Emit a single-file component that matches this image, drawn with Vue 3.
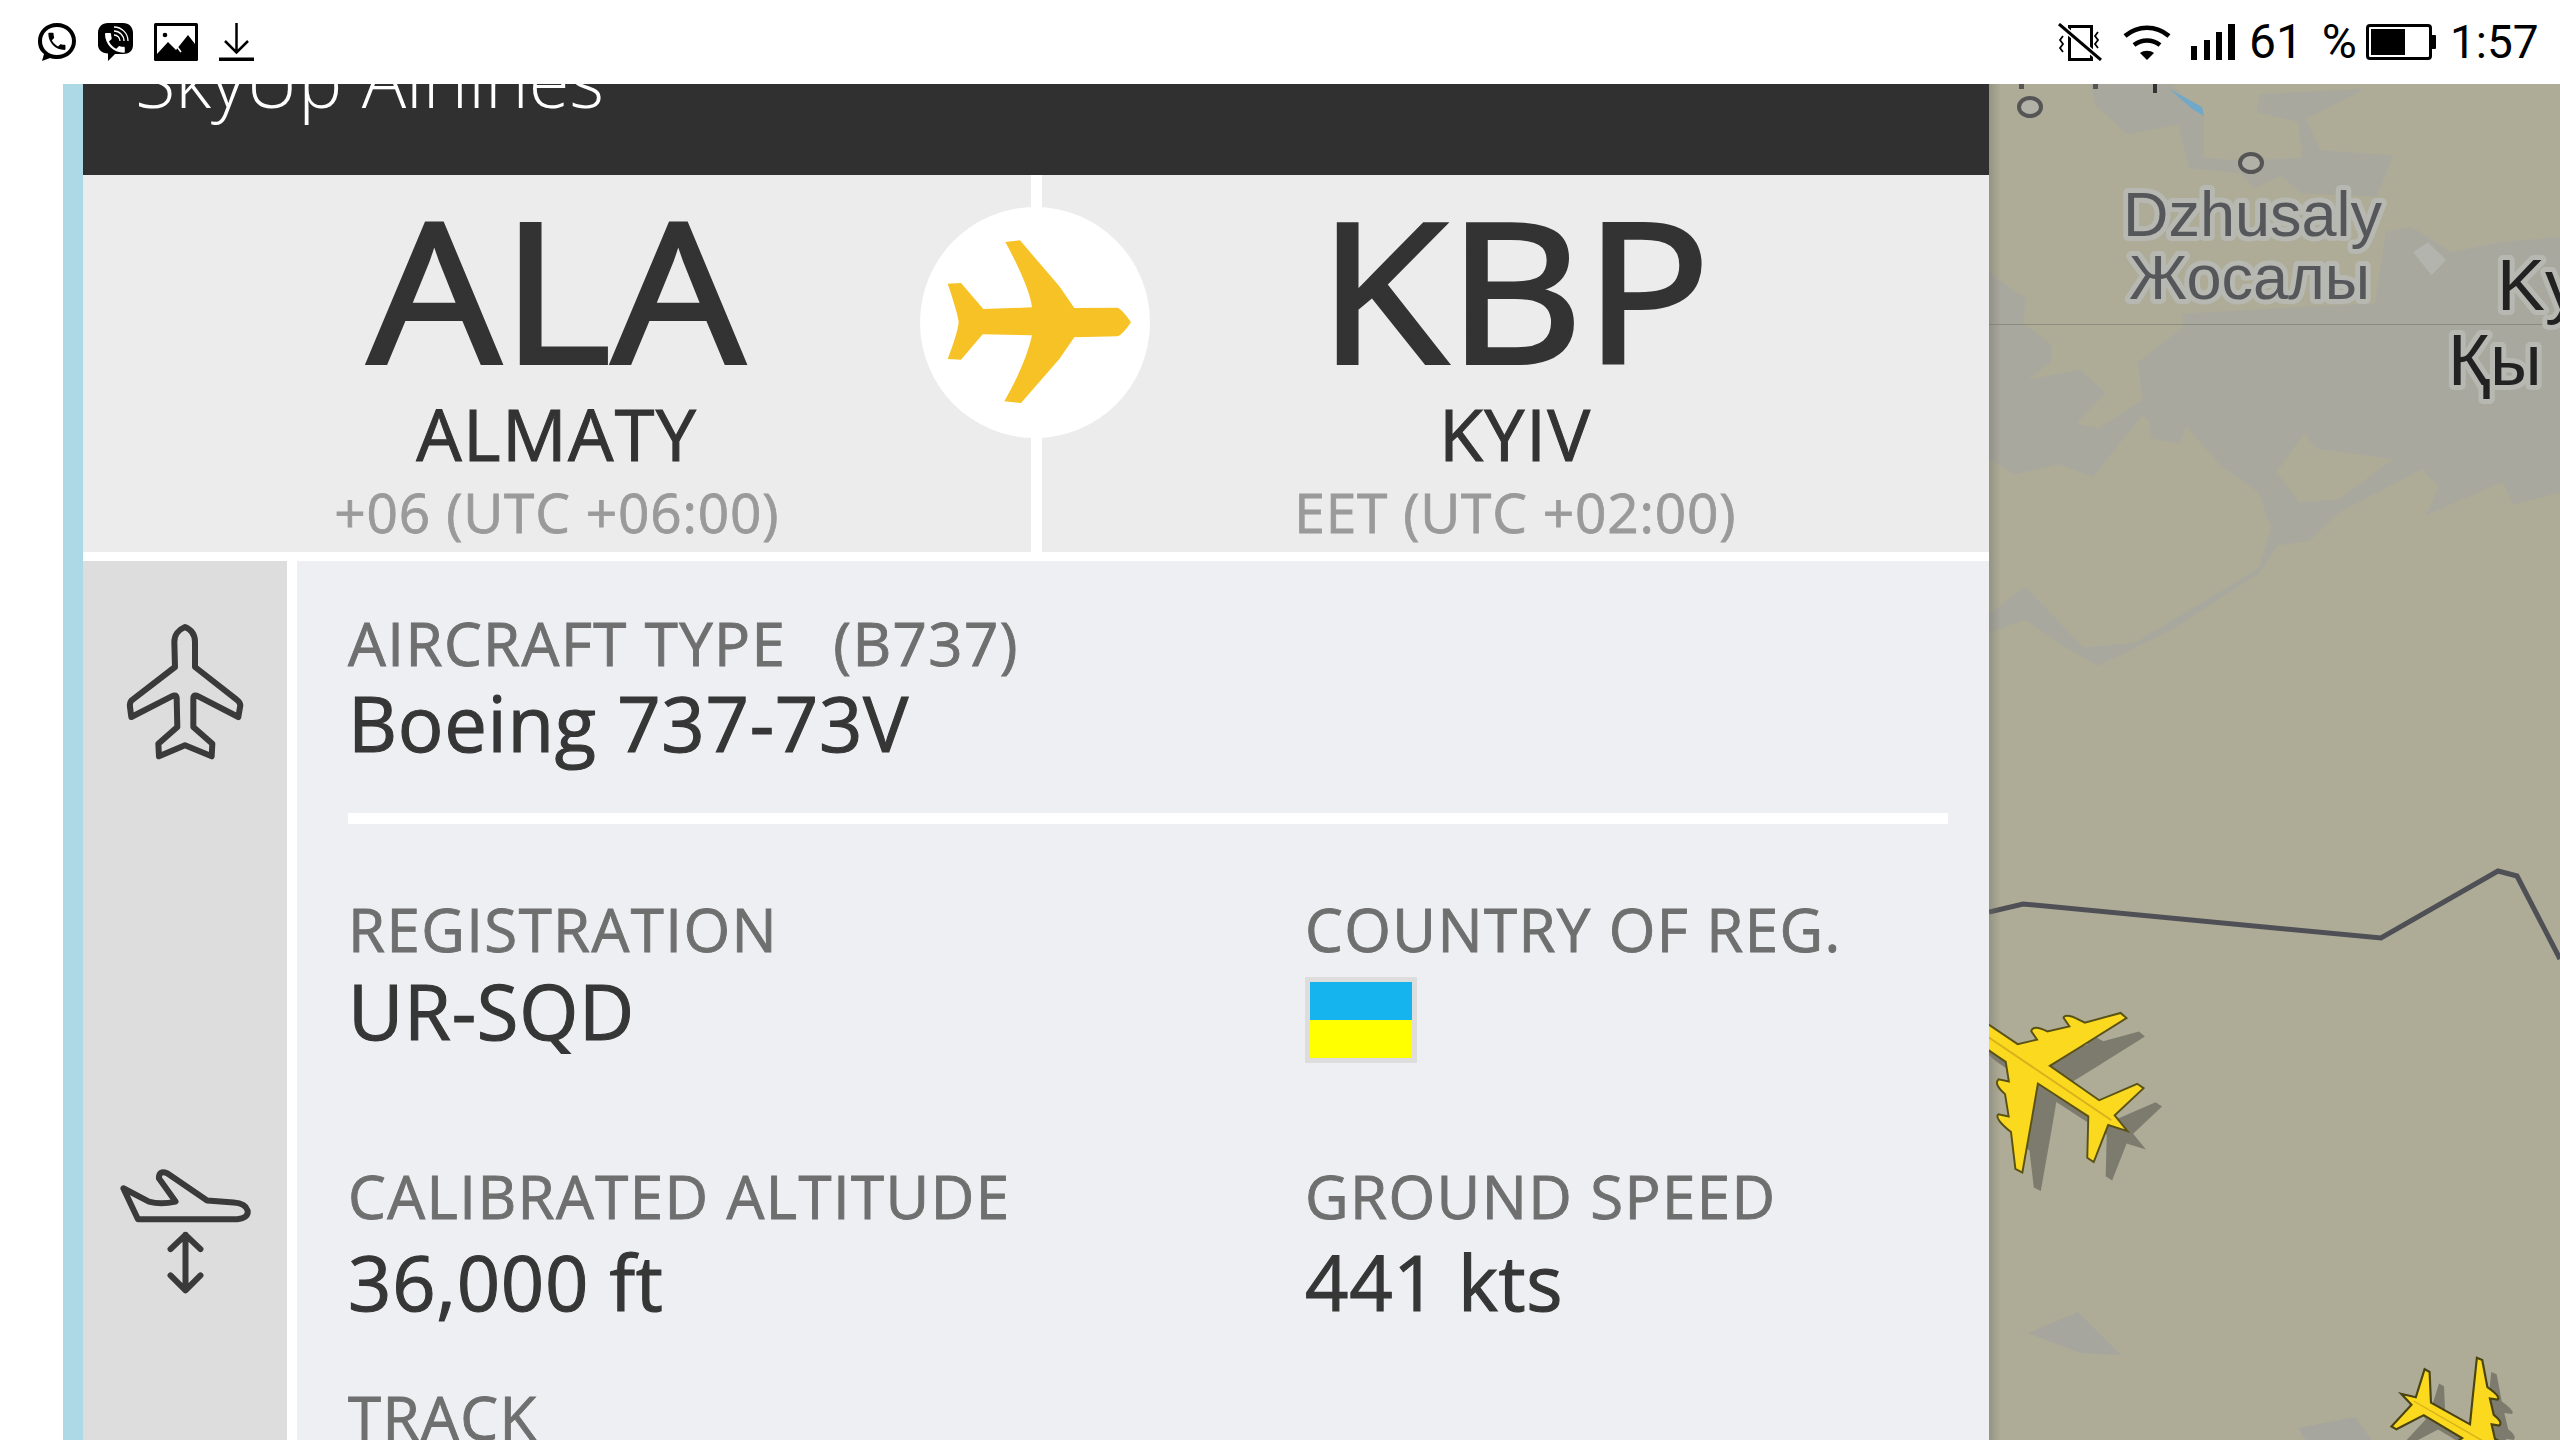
<script setup>
const planePath = 'M0 -85 Q9 -80 11 -60 L11 -24 L26 -10 L30 -20 Q37 -22 39 -6 L56 10 L60 0 Q66 -2 68 21 L97 46 L96 54 L42 30 L11 16 L10 78 L46 101 L46 109 L6 100 L0 120 L-6 100 L-46 109 L-46 101 L-10 78 L-11 16 L-42 30 L-96 54 L-97 46 L-68 21 Q-66 -2 -60 0 L-56 10 L-39 -6 Q-37 -22 -30 -20 L-26 -10 L-11 -24 L-11 -60 Q-9 -80 0 -85Z'
</script>

<template>
  <div class="screen">
    <header class="status">
      <div class="status-left">
        <svg class="i-wa" viewBox="0 0 40 38" preserveAspectRatio="none">
          <path fill-rule="evenodd" d="M20 0C9 0 1 8 1 18c0 6 2 10 6 13l-2 7 8-3c2 .6 4 1 7 1 11 0 19-8 19-18S31 0 20 0zm0 4c8.500 0 15 6 15 14s-6.500 14-15 14S5 26 5 18 11.500 4 20 4z" />
          <g transform="translate(8.500 7) scale(.95)"><path d="M6.620 10.790c1.440 2.830 3.760 5.140 6.590 6.590l2.200-2.200c.27-.27.67-.36 1.020-.24 1.120.37 2.330.57 3.570.57.55 0 1 .45 1 1V20c0 .55-.45 1-1 1-9.390 0-17-7.610-17-17 0-.55.45-1 1-1h3.500c.55 0 1 .45 1 1 0 1.250.2 2.450.57 3.570.11.350.03.740-.25 1.020l-2.200 2.200z" /></g>
        </svg>
        <svg class="i-vb" viewBox="0 0 35 38" preserveAspectRatio="none">
          <path d="M10 0h15c6 0 10 4 10 10v12c0 6-4 9-10 9h-8l-7 7v-7.500C4 30 0 27 0 22V10C0 4 4 0 10 0z" />
          <g transform="translate(3.700 6.700) scale(1.100)"><path fill="#fff" d="M6.620 10.790c1.440 2.830 3.760 5.140 6.590 6.590l2.200-2.200c.27-.27.67-.36 1.020-.24 1.120.37 2.330.57 3.570.57.55 0 1 .45 1 1V20c0 .55-.45 1-1 1-9.390 0-17-7.610-17-17 0-.55.45-1 1-1h3.500c.55 0 1 .45 1 1 0 1.250.2 2.450.57 3.570.11.350.03.740-.25 1.020l-2.200 2.200z" /></g>
          <path d="M16 4a14 14 0 0 1 14 14M16 8a10 10 0 0 1 10 10M16 12a6 6 0 0 1 6 6" fill="none" stroke="#fff" stroke-width="1.300" />
        </svg>
        <svg class="i-im" viewBox="0 0 44 38" preserveAspectRatio="none">
          <rect width="44" height="38" rx="1.500" />
          <rect x="3" y="3" width="38" height="32" fill="#fff" />
          <circle cx="11" cy="12" r="2.300" />
          <path d="M3 35V31L14 19 22 27 34 12 41 21V35z" />
          <path d="M15 13L27 29" stroke="#fff" stroke-width="1.600" />
        </svg>
        <svg class="i-dl" viewBox="0 0 35 38" preserveAspectRatio="none">
          <path d="M17.500 0v29M6 18l11.500 11.500L29 18" fill="none" stroke="#000" stroke-width="2.500" />
          <rect y="34.500" width="35" height="3.500" />
        </svg>
      </div>
      <div class="status-right">
        <svg class="i-vib" viewBox="0 0 44 38" preserveAspectRatio="none">
          <path d="M11.500 3.500h22v33h-22z" fill="none" stroke="#000" stroke-width="3" />
          <path d="M1 1l42 36" stroke="#fff" stroke-width="6" />
          <path d="M1 1l42 36" stroke="#000" stroke-width="3" />
          <path d="M5 13l-3 4 3 4-3 4 3 4M40 9l-3 4 3 4-3 4 3 4" fill="none" stroke="#000" stroke-width="1.800" />
        </svg>
        <svg class="i-wifi" viewBox="0 0 50 36" preserveAspectRatio="none">
          <path d="M3 12C16 1 34 1 47 12M12 21c8-6 18-6 26 0" fill="none" stroke="#000" stroke-width="4.600" />
          <path d="M18 29c4-3 10-3 14 0l-7 7z" />
        </svg>
        <svg class="i-sig" viewBox="0 0 44 36" preserveAspectRatio="none">
          <rect x="0" y="22" width="6" height="14" /><rect x="13" y="16" width="6" height="20" /><rect x="25" y="8" width="6" height="28" /><rect x="37" y="0" width="7" height="36" />
        </svg>
        <span class="st-txt pct">61 %</span>
        <svg class="i-bat" viewBox="0 0 70 36" preserveAspectRatio="none">
          <rect x="1.500" y="1.500" width="63" height="33" rx="2.500" fill="none" stroke="#000" stroke-width="3" />
          <rect x="5" y="5" width="34" height="26" />
          <rect x="65" y="11" width="5" height="14" rx="1" />
        </svg>
        <span class="st-txt time">1:57</span>
      </div>
    </header>

    <main class="main">
      <section class="card">
        <div class="airline"><span class="airline-name">SkyUp Airlines</span></div>

        <div class="route">
          <div class="port">
            <div class="code">ALA</div>
            <div class="city">ALMATY</div>
            <div class="tz">+06 (UTC +06:00)</div>
          </div>
          <div class="route-rule"></div>
          <div class="port">
            <div class="code">KBP</div>
            <div class="city">KYIV</div>
            <div class="tz">EET (UTC +02:00)</div>
          </div>
          <div class="route-badge">
            <svg viewBox="122 112 690 693" width="230" height="231">
              <path fill="#f7c226" d="M205 342L245 340 312 418 458 413Q450 350 378 217L422 212 540 350 585 415 715 414Q730 420 755 458 730 495 715 500L585 503 540 568 425 700 375 695Q440 580 458 497L310 494 245 570 205 568Q235 490 238 458 235 430 205 342Z" />
            </svg>
          </div>
        </div>

        <div class="body">
          <aside class="rail">
            <svg class="rail-plane" viewBox="195 245 360 420">
              <path fill="none" stroke="#3a3a3a" stroke-width="18" stroke-linejoin="round" d="M375 260C355 268 343 285 343 305L345 380 215 480Q208 488 210 500L214 530 335 468Q350 460 350 475L352 560 295 610 297 648 375 615 455 648 457 610 400 560 400 475Q400 460 415 468L535 530 541 495Q540 485 530 478L405 380 405 305C405 285 395 268 375 260Z" />
            </svg>
            <svg class="rail-alt" viewBox="175 145 400 380">
              <path fill="none" stroke="#3a3a3a" stroke-width="18" stroke-linejoin="round" stroke-linecap="round" d="M188 205L232 298 530 298Q565 295 562 272 555 250 520 248L440 242 320 160Q295 150 295 175L345 245Q300 255 265 245Z" />
              <path fill="none" stroke="#3a3a3a" stroke-width="18" stroke-linejoin="round" stroke-linecap="round" d="M375 345V510M330 388L375 345 420 388M330 467L375 512 420 467" />
            </svg>
          </aside>
          <div class="details">
            <div class="block type-block">
              <div class="label">AIRCRAFT TYPE <span class="icao">(B737)</span></div>
              <div class="value">Boeing 737-73V</div>
            </div>
            <div class="rule"></div>
            <div class="grid">
              <div class="cell reg">
                <div class="label">REGISTRATION</div>
                <div class="value">UR-SQD</div>
              </div>
              <div class="cell reg">
                <div class="label">COUNTRY OF REG.</div>
                <div class="flag"><i class="blue"></i><i class="yellow"></i></div>
              </div>
              <div class="cell alt">
                <div class="label">CALIBRATED ALTITUDE</div>
                <div class="value tall">36,000 ft</div>
              </div>
              <div class="cell alt">
                <div class="label">GROUND SPEED</div>
                <div class="value tall">441 kts</div>
              </div>
              <div class="cell track">
                <div class="label">TRACK</div>
              </div>
            </div>
          </div>
        </div>
      </section>

      <div class="map">
        <svg class="map-svg" viewBox="0 0 571 1356" width="571" height="1356">
          <defs>
            <path id="plane" :d="planePath" />
            <linearGradient id="edge" x1="0" x2="1" y1="0" y2="0">
              <stop offset="0" stop-color="#6f6f66" stop-opacity=".4" /><stop offset="1" stop-color="#6f6f66" stop-opacity="0" />
            </linearGradient>
          </defs>
          <rect width="571" height="1356" fill="#aeac97" />
          <g transform="scale(.3642 .5102)" fill="#a8a89f">
            <path d="M280 0L500 0 590 60 520 80 380 98 290 40Z" />
            <path d="M520 80L590 60 590 145 690 150 860 145 850 75 735 55 745 20 1030 10 870 68 910 130 1110 140 1065 220 860 215 800 180 730 205 690 175 550 165Z" />
            <path fill-rule="evenodd" d="M0 370L100 420 95 470 170 510 170 545 105 580 250 560 320 605 240 665 300 675 420 620 410 545 535 475 530 450 1060 430 1090 290 1160 280 1270 330 1400 310 1568 300 1568 800 1440 825 1410 780 1200 845 1235 790 1190 755 960 840 880 895 790 905 770 930 740 960 500 1070 300 1140 200 1100 100 1050 0 1075 0 1040 100 985 260 1105 400 1095 530 1040 740 950 775 870 740 800 640 750 540 670 525 705 445 695 440 660 420 650 285 770 190 745 70 765 0 735ZM790 760L865 685 900 715 1110 735 960 815 850 820Z" />
            <path fill="#b3b4ad" d="M1165 330L1205 310 1255 345 1215 375Z" />
            <path fill="#6fa8c8" d="M495 10L585 45 590 62 560 50Z" />
          </g>
          <rect x="0" y="240" width="571" height="1" fill="#8b8b80" />
          <path fill="#a6a69f" d="M89 1228L132 1271 91 1269 39 1249ZM309 1344L366 1333 383 1356 317 1356Z" />
          <path fill="none" stroke="#4f5055" stroke-width="5" d="M0 828L34 820 392 854 509 787 528 792 571 875" />
          <rect x="0" y="0" width="12" height="1356" fill="url(#edge)" />

          <rect x="30" y="0" width="5" height="5" fill="#565656" /><rect x="104" y="0" width="5" height="5" fill="#565656" /><rect x="164" y="0" width="4" height="9" fill="#333" />
          <ellipse cx="41" cy="23" rx="11" ry="9" fill="#b1b1a8" stroke="#555" stroke-width="4" />
          <ellipse cx="262" cy="79" rx="11" ry="9" fill="#b1b1a8" stroke="#555" stroke-width="4" />

          <text class="t-city" x="134" y="152">Dzhusaly</text>
          <text class="t-city" x="140" y="215">Жосалы</text>
          <text class="t-big" x="508" y="226">Ky</text>
          <text class="t-big" x="459" y="301">Қы</text>

          <g transform="translate(42 982) rotate(-56) scale(.97)">
            <use href="#plane" fill="#7c7b6e" transform="rotate(56) translate(19 19) rotate(-56)" />
            <use href="#plane" fill="#fbd91e" stroke="#5a5214" stroke-width="2" />
            <path d="M0 -80V100" stroke="#d8b21c" stroke-width="2" />
          </g>
          <g transform="translate(487 1353) rotate(120) scale(.72)">
            <use href="#plane" fill="#7c7b6e" transform="rotate(-120) translate(20 20) rotate(120)" />
            <use href="#plane" fill="#fbd91e" stroke="#4a4412" stroke-width="3" />
            <path d="M0 -80V100" stroke="#d8b21c" stroke-width="2" />
          </g>
        </svg>
      </div>
    </main>
  </div>
</template>

<style>
html, body { margin: 0; background: #fff; }
</style>

<style scoped>
.screen {
  width: 2560px;
  height: 1440px;
  overflow: hidden;
  display: flex;
  flex-direction: column;
  background: #fff;
  font-family: "Open Sans", "Noto Sans", sans-serif;
}

/* status bar */
.status {
  height: 84px;
  flex: none;
  display: flex;
  justify-content: space-between;
  padding: 0 23px 0 37px;
  background: #fff;
}
.status-left, .status-right { display: flex; align-items: flex-start; padding-top: 23px; }
.status-left { gap: 21px; }
.i-wa { width: 40px; height: 38px; }
.i-vb { width: 35px; height: 38px; }
.i-im { width: 44px; height: 38px; }
.i-dl { width: 35px; height: 38px; }
.i-vib { width: 44px; height: 38px; margin-right: 20px; }
.i-wifi { width: 50px; height: 36px; margin-right: 19px; margin-top: 1px; }
.i-sig { width: 44px; height: 36px; margin-right: 14px; margin-top: 1px; }
.i-bat { width: 70px; height: 36px; margin: 1px 14px 0 10px; }
.st-txt { font-family: Roboto, "Liberation Sans", sans-serif; font-size: 46px; line-height: 38px; color: #000; }
.pct { width: 107px; font-size: 48px; word-spacing: 7px; white-space: nowrap; }
.time { width: 87px; }

/* main area */
.main { flex: 1; min-height: 0; display: flex; padding-left: 63px; }
.card {
  width: 1906px;
  flex: none;
  border-left: 20px solid #add8e6;
  display: flex;
  flex-direction: column;
  background: #fff;
}
.airline {
  height: 91px;
  flex: none;
  background: #303030;
  overflow: hidden;
  display: flex;
  align-items: flex-end;
  padding: 0 0 59px 52px;
  box-sizing: border-box;
}
.airline-name {
  font-size: 74px;
  font-weight: 300;
  line-height: 72px;
  color: #fff;
  white-space: nowrap;
}

/* route */
.route {
  position: relative;
  height: 377px;
  flex: none;
  display: grid;
  grid-template-columns: 1fr 11px 1fr;
  background: #ececec;
}
.route-rule { background: #fff; }
.port { display: flex; flex-direction: column; align-items: center; color: #333; }
.code { font-size: 194px; line-height: 200px; margin-top: 13px; height: 199px; letter-spacing: 1px; transform: scaleX(1.080); -webkit-text-stroke: 4px #333; }
.city { font-size: 72px; line-height: 80px; margin-top: 6px; height: 80px; letter-spacing: 1.300px; -webkit-text-stroke: 1px #333; }
.tz { font-size: 55px; line-height: 66px; color: #9a9a9a; margin-top: 6px; letter-spacing: .8px; -webkit-text-stroke: .8px #9a9a9a; }
.route-badge {
  position: absolute;
  left: 837px;
  top: 32px;
  width: 230px;
  height: 231px;
  background: #fff;
  border-radius: 50%;
}
.route-badge svg { display: block; }

/* body */
.body {
  flex: 1;
  min-height: 0;
  display: flex;
  margin-top: 9px;
  overflow: hidden;
}
.rail {
  width: 204px;
  flex: none;
  background: #ddd;
  display: flex;
  flex-direction: column;
  align-items: center;
  padding-top: 61px;
}
.rail-plane { width: 120px; height: 140px; flex: none; }
.rail-alt { width: 133px; height: 127px; margin-top: 406px; flex: none; }
.details {
  flex: 1;
  margin-left: 10px;
  background: #edeff3;
  padding: 47px 41px 0 51px;
  overflow: hidden;
}
.label { font-size: 60px; line-height: 70px; color: #6f6f6f; white-space: nowrap; letter-spacing: 1.400px; -webkit-text-stroke: .9px #6f6f6f; }
.icao { margin-left: 30px; }
.value { font-size: 76px; line-height: 90px; color: #363636; white-space: nowrap; letter-spacing: .7px; -webkit-text-stroke: 1.100px #363636; }
.rule { height: 11px; background: #fff; margin-top: 45px; }
.grid { display: grid; grid-template-columns: 957px 1fr; }
.cell.reg { padding-top: 70px; height: 337px; box-sizing: border-box; }
.cell.reg .value { margin-top: 2px; }
.cell.alt { height: 221px; box-sizing: border-box; }
.value.tall { margin-top: 6px; }
.cell.track { grid-column: 1 / -1; }
.flag {
  width: 102px;
  height: 76px;
  border: 5px solid #ddd;
  margin-top: 13px;
  display: flex;
  flex-direction: column;
}
.flag i { display: block; flex: 1; }
.flag .blue { background: #15b4ee; }
.flag .yellow { background: #ffff00; }

/* map */
.map { flex: 1; min-width: 0; overflow: hidden; }
.map-svg { display: block; }
.t-city {
  font-family: "Liberation Sans", Arial, sans-serif;
  font-size: 63px;
  fill: #55575a;
  stroke: #b6b8b1;
  stroke-width: 10px;
  stroke-linejoin: round;
  paint-order: stroke;
}
.t-big {
  font-family: "Liberation Sans", Arial, sans-serif;
  font-size: 72px;
  fill: #222;
  stroke: #b6b8b1;
  stroke-width: 10px;
  stroke-linejoin: round;
  paint-order: stroke;
}
</style>
